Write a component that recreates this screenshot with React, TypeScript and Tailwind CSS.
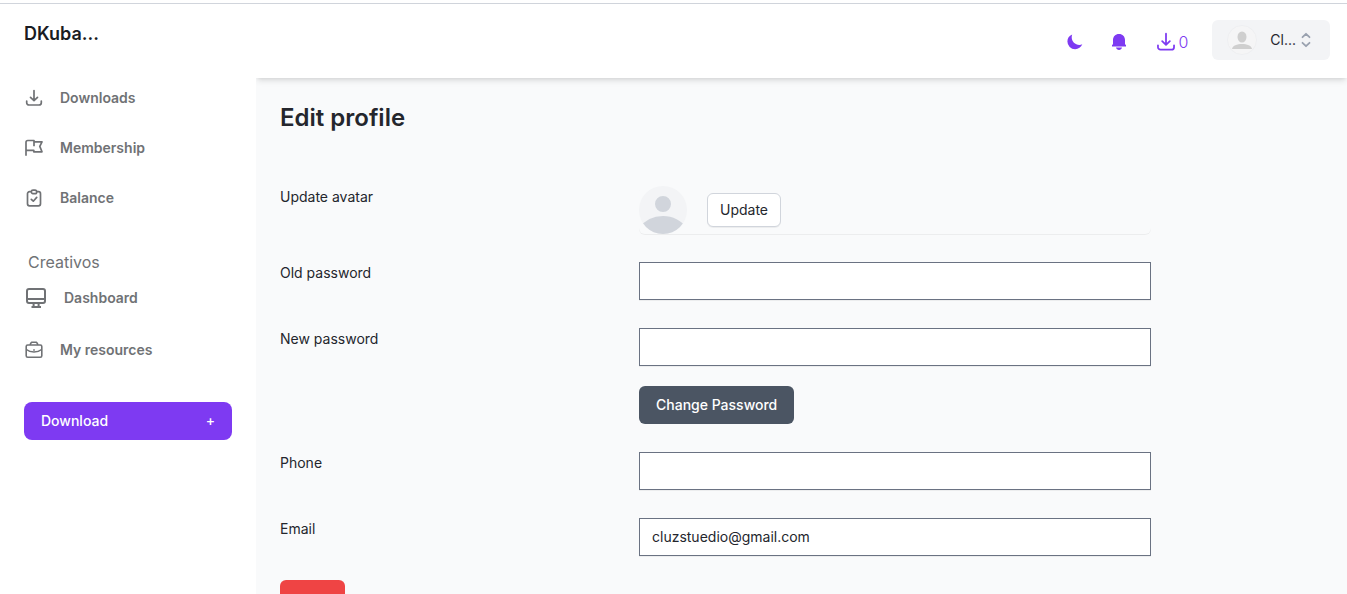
import { useState } from "react";

const MoonIcon = () => (
    <svg className="w-4 h-4" viewBox="0 0 16 16" fill="currentColor" aria-hidden="true">
        <path d="M5.2 0.4A7.6 7.6 0 0 0 0.4 7.5A7.7 7.7 0 0 0 8.1 15.2C11.4 15.2 14.1 13.2 15.3 10.3C14.4 10.7 13.4 10.9 12.4 10.9C8.1 10.9 4.7 7.5 4.7 3.3C4.7 2.3 4.8 1.3 5.2 0.4Z" />
    </svg>
);

const BellIcon = () => (
    <svg className="w-4 h-4" viewBox="0 0 16 16" fill="currentColor" aria-hidden="true">
        <path d="M8 0C4.4 0 2 2.6 2 6v4.2L1 11v1.5h14V11l-1-.8V6c0-3.4-2.4-6-6-6z" />
        <path d="M5 13.5h6c-.3 1.500-1.500 2.400-3 2.400s-2.700-.9-3-2.400z" />
    </svg>
);

const TrayIcon = ({ className }: { className: string }) => (
    <svg className={className} viewBox="0 0 20 20" fill="none" stroke="currentColor" strokeLinecap="round" strokeLinejoin="round" aria-hidden="true">
        <path d="M10 2.500v10M6.500 9.300l3.500 3.400 3.500-3.400M2.700 13v1.700a2.300 2.300 0 0 0 2.300 2.300h10a2.300 2.300 0 0 0 2.300-2.300V13" />
    </svg>
);

const FlagIcon = () => (
    <svg className="w-5 h-5" viewBox="0 0 20 20" fill="none" stroke="currentColor" strokeWidth="1.700" strokeLinejoin="round" aria-hidden="true">
        <path d="M2 17.800V4.300A1.800 1.800 0 0 1 3.800 2.500H10V3.800H18L15.800 8.400L18 13.800H9.800V12.300H2M10 3.800V8.300" />
    </svg>
);

const ClipboardIcon = () => (
    <svg className="w-5 h-5" viewBox="0 0 20 20" fill="none" stroke="currentColor" strokeWidth="1.700" strokeLinecap="round" strokeLinejoin="round" aria-hidden="true">
        <path d="M7.300 3.700H5.500a2 2 0 0 0-2 2v10.100a2 2 0 0 0 2 2h9a2 2 0 0 0 2-2V5.700a2 2 0 0 0-2-2h-1.800M7.300 3.700a1.700 1.700 0 0 1 1.700-1.500h2a1.700 1.700 0 0 1 0 3.400H9a1.700 1.700 0 0 1-1.700-1.900zM7.300 11.300l2 1.900 3.400-3.800" />
    </svg>
);

const MonitorIcon = () => (
    <svg className="w-6 h-6" viewBox="0 0 24 24" fill="none" stroke="currentColor" strokeWidth="2" strokeLinejoin="round" aria-hidden="true">
        <rect x="3" y="3" width="18" height="14" rx="2" />
        <path d="M3 13h18M9.600 17v4M14.600 17v4M7.500 21h9.500" />
    </svg>
);

const BriefcaseIcon = () => (
    <svg className="w-5 h-5" viewBox="0 0 20 20" fill="none" stroke="currentColor" strokeWidth="1.600" strokeLinejoin="round" aria-hidden="true">
        <rect x="2.200" y="5" width="15.600" height="12.200" rx="1.500" />
        <path d="M6.300 5a3 3 0 0 1 1.500-2.800h4.400A3 3 0 0 1 13.700 5M2.400 9.500c2 1.700 5 2.500 7.600 2.500s5.600-.8 7.600-2.500M10 9.300v1.500" />
    </svg>
);

const SelectorIcon = () => (
    <svg className="w-4 h-4 text-gray-400" viewBox="0 0 16 16" fill="none" stroke="currentColor" strokeWidth="1.800" strokeLinecap="round" strokeLinejoin="round" aria-hidden="true">
        <path d="M4.500 5.200L8 1.800l3.500 3.400M4.500 10.800L8 14.200l3.500-3.400" />
    </svg>
);

const links = [
    { name: "Downloads", icon: <TrayIcon className="w-5 h-5 stroke-[1.7]" /> },
    { name: "Membership", icon: <FlagIcon /> },
    { name: "Balance", icon: <ClipboardIcon /> },
];

const creatorLinks = [
    { name: "Dashboard", icon: <MonitorIcon /> },
    { name: "My resources", icon: <BriefcaseIcon /> },
];

type NavLink = { name: string; icon: React.ReactNode };

function NavList({ items }: { items: NavLink[] }) {
    return (
        <ul>
            {items.map((item) => (
                <li key={item.name}>
                    <a href="#" className="flex items-center gap-4 px-6 py-[15px] text-sm font-semibold hover:text-gray-800">
                        {item.icon}
                        <span>{item.name}</span>
                    </a>
                </li>
            ))}
        </ul>
    );
}

type FieldProps = {
    id: string;
    label: string;
    type: string;
    value: string;
    onChange: (value: string) => void;
    children?: React.ReactNode;
};

function Field({ id, label, type, value, onChange, children }: FieldProps) {
    return (
        <div className="grid grid-cols-3 gap-x-[34px] items-start">
            <label htmlFor={id} className="mt-px text-sm">{label}</label>
            <div className="col-span-2">
                <input
                    type={type}
                    id={id}
                    value={value}
                    onChange={(e) => onChange(e.target.value)}
                    className="block w-full max-w-lg px-3 py-2 text-sm bg-white border border-gray-500 shadow-2xs"
                />
                {children}
            </div>
        </div>
    );
}

export default function App() {
    const [oldPassword, setOldPassword] = useState("");
    const [newPassword, setNewPassword] = useState("");
    const [phone, setPhone] = useState("");
    const [email, setEmail] = useState("cluzstuedio@gmail.com");

    return (
        <div className="h-screen overflow-hidden pt-[3px] bg-white font-[Inter,sans-serif] text-[#24262d]">
            <div className="flex h-full border-t border-gray-300">
                <aside className="relative z-20 w-64 shrink-0 pt-4 bg-white text-[#707275]">
                    <a href="#" className="block px-6 mb-[25px] text-lg leading-7 font-semibold text-[#1a1c23]">DKuba...</a>
                    <NavList items={links} />
                    <h2 className="pt-[29px] px-7 h-12 leading-5">Creativos</h2>
                    <NavList items={creatorLinks} />
                    <div className="px-6 mt-[27px]">
                        <button type="button" className="flex items-center justify-between w-full px-[17px] py-[9px] text-sm font-medium text-white bg-[#7e3af2] rounded-lg">
                            Download
                            <span aria-hidden="true">+</span>
                        </button>
                    </div>
                </aside>

                <div className="flex flex-col flex-1 min-w-0">
                    <header className="z-10 flex items-center justify-end pt-4 pb-[18px] pr-[17px] bg-white shadow-md text-[#7e3af2]">
                        <div className="flex items-center gap-7 pt-[3px] mr-6">
                            <button type="button" aria-label="Toggle color mode"><MoonIcon /></button>
                            <button type="button" aria-label="Notifications"><BellIcon /></button>
                            <a href="#" aria-label="Downloads" className="flex items-center gap-px font-light">
                                <TrayIcon className="w-[22px] h-[22px] stroke-[1.6]" />
                                0
                            </a>
                        </div>
                        <button type="button" className="flex items-center h-10 pl-[15px] pr-4 text-sm bg-gray-100 rounded-md text-[#24262d]">
                            <svg className="w-[30px] h-[30px] mr-[13px]" viewBox="0 0 30 30" aria-hidden="true">
                                <circle cx="15" cy="15" r="14.500" fill="#f5f5f6" stroke="#eeeff1" />
                                <ellipse cx="15" cy="12" rx="4.500" ry="5.500" fill="#cfcfcf" />
                                <path d="M5 24c.6-3.600 5-5 10-5s9.400 1.400 10 5z" fill="#cfcfcf" />
                            </svg>
                            <span className="mr-0.5">Cl...</span>
                            <SelectorIcon />
                        </button>
                    </header>

                    <main className="flex-1 px-6 bg-[#f9fafb]">
                        <h1 className="mt-6 mb-[52px] text-2xl font-semibold">Edit profile</h1>
                        <form onSubmit={(e) => e.preventDefault()} className="flex flex-col gap-7">
                            <div className="grid grid-cols-3 gap-x-[34px] items-start">
                                <span className="mt-px text-sm">Update avatar</span>
                                <div className="col-span-2">
                                    <div className="flex items-center max-w-lg rounded-md shadow-2xs">
                                        <svg className="w-12 h-12 rounded-full bg-gray-100 text-gray-300" viewBox="0 0 24 24" fill="currentColor" aria-hidden="true">
                                            <path d="M24 20.993V24H0v-2.996A14.977 14.977 0 0112.004 15c4.904 0 9.260 2.354 11.996 5.993zM16.002 8.999a4 4 0 11-8 0 4 4 0 018 0z" />
                                        </svg>
                                        <button type="button" className="ml-5 px-3 py-1.5 text-sm bg-white border border-gray-300 rounded-md shadow-2xs">
                                            Update
                                        </button>
                                    </div>
                                </div>
                            </div>
                            <Field id="old-password" label="Old password" type="password" value={oldPassword} onChange={setOldPassword} />
                            <Field id="new-password" label="New password" type="password" value={newPassword} onChange={setNewPassword}>
                                <button type="button" className="mt-5 px-[17px] py-[9px] text-sm font-medium text-white bg-[#4b5563] rounded-md">
                                    Change Password
                                </button>
                            </Field>
                            <Field id="phone" label="Phone" type="tel" value={phone} onChange={setPhone} />
                            <Field id="email" label="Email" type="email" value={email} onChange={setEmail} />
                            <button type="submit" className="self-start -mt-1 px-4 py-4 text-sm font-medium text-white bg-[#ef4444] rounded-md">
                                Save
                            </button>
                        </form>
                    </main>
                </div>
            </div>
        </div>
    );
}
